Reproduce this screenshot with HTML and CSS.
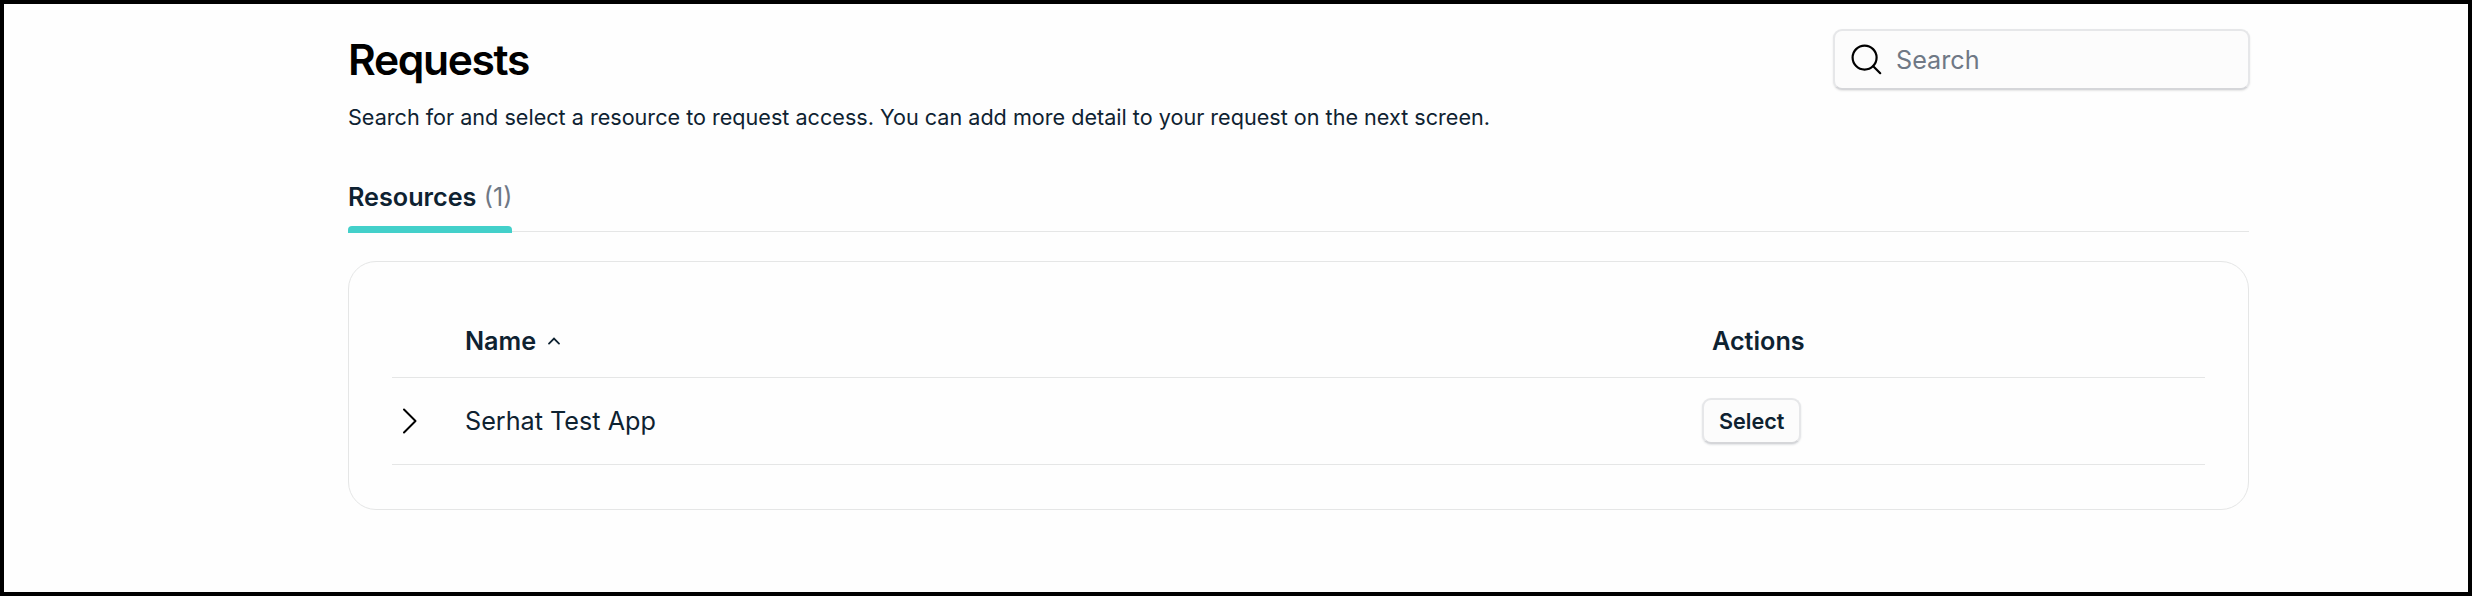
FILE: index.html
```html
<!DOCTYPE html>
<html lang="en">
<head>
    <meta charset="utf-8">
    <title>Requests</title>
    <link rel="stylesheet" href="styles.css">
</head>
<body>
    <main class="page">
        <header class="page-header">
            <h1>Requests</h1>
            <label class="search">
                <svg class="search-icon" width="32" height="32" viewBox="0 0 32 32">
                    <circle cx="13.6" cy="13.6" r="12" />
                    <path d="M22.2 22.2 L29.2 29.2" />
                </svg>
                <input type="text" placeholder="Search">
            </label>
        </header>
        <p class="description">Search for and select a resource to request access. You can add more detail to your request on the next screen.</p>

        <nav class="tabs">
            <a class="tab active">Resources <span class="count">(1)</span></a>
        </nav>

        <section class="panel">
            <table>
                <thead>
                    <tr>
                        <th class="col-toggle"></th>
                        <th class="col-name">Name
                            <svg class="sort-icon" width="12" height="8" viewBox="0 0 12 8"><path d="M1 6.6 L6 1.6 L11 6.6" /></svg>
                        </th>
                        <th class="col-actions">Actions</th>
                    </tr>
                </thead>
                <tbody>
                    <tr>
                        <td class="col-toggle">
                            <svg class="chevron" width="16" height="28" viewBox="0 0 16 28"><path d="M2 2.5 L13.5 14 L2 25.5" /></svg>
                        </td>
                        <td class="col-name">Serhat Test App</td>
                        <td class="col-actions"><button type="button">Select</button></td>
                    </tr>
                </tbody>
            </table>
        </section>
    </main>
</body>
</html>
```

FILE: styles.css
```css
* {
    box-sizing: border-box;
}

body {
    margin: 0;
    height: 596px;
    border: 4px solid #000;
    background-color: #fefefe;
    color: #0e2231;
    font-family: Inter, "Liberation Sans", sans-serif;
    font-size: 25.2px;
}

.page {
    margin: 0 219px 0 344px;
    padding-top: 25px;
}

.page-header {
    display: flex;
    justify-content: space-between;
    height: 61px;
}
h1 {
    margin: 0;
    color: #000;
    font-size: 42.6px;
    font-weight: 600;
    line-height: 61px;
    letter-spacing: -1.35px;
}

.search {
    display: flex;
    align-items: center;
    width: 417px;
    margin-right: -1px;
    padding-left: 16px;
    border: 2px solid #e6e7e9;
    border-bottom-color: #d5d6d9;
    border-radius: 9px;
    background-color: #fcfcfc;
    box-shadow: 0 1px 2px rgba(0, 0, 0, 0.1);
}
.search-icon {
    flex: none;
    fill: none;
    stroke: #000;
    stroke-width: 2.2;
    stroke-linecap: round;
}
.search input {
    width: 330px;
    margin-left: 13px;
    padding: 0;
    border: 0;
    background: none;
    font: inherit;
}
.search input::placeholder {
    color: #6f7885;
    opacity: 1;
}

.description {
    margin: 11px 0 0;
    font-size: 21.6px;
    line-height: 32px;
}

.tabs {
    display: flex;
    height: 53px;
    margin-top: 46px;
    border-bottom: 1px solid #e5e6e6;
}
.tab {
    height: 54px;
    font-weight: 600;
    line-height: 36px;
    white-space: nowrap;
}
.tab.active::after {
    content: "";
    display: block;
    height: 7px;
    margin-top: 11px;
    border-radius: 4px 4px 0 0;
    background-color: #43d0ca;
}
.count {
    margin-left: 1px;
    color: #6f7885;
    font-weight: 400;
}

.panel {
    margin-top: 29px;
    padding: 43px;
    height: 249px;
    border: 1px solid #e5e6e6;
    border-radius: 28px;
}
table {
    width: 100%;
    table-layout: fixed;
    border-collapse: separate;
    border-spacing: 0;
}
th, td {
    padding: 0;
    border-bottom: 1px solid #e5e6e6;
    text-align: left;
    vertical-align: middle;
}
th {
    height: 73px;
    font-weight: 600;
}
td {
    height: 87px;
}
.col-toggle {
    width: 73px;
}
.col-actions {
    width: 503px;
}
th.col-actions {
    padding-left: 10px;
}

.sort-icon {
    margin-left: 5px;
    vertical-align: 5px;
    fill: none;
    stroke: #0e2231;
    stroke-width: 1.8;
    stroke-linecap: round;
}
.chevron {
    display: block;
    margin-left: 10px;
    fill: none;
    stroke: #000;
    stroke-width: 2;
    stroke-linecap: round;
    stroke-linejoin: round;
}

button {
    display: block;
    height: 46px;
    padding: 0 15px;
    border: 2px solid #e6e7e9;
    border-bottom-color: #d5d6d9;
    border-radius: 9px;
    background-color: #fcfcfc;
    box-shadow: 0 1px 2px rgba(14, 34, 49, 0.12);
    color: inherit;
    font: 600 21.6px/40px Inter, "Liberation Sans", sans-serif;
}
```
